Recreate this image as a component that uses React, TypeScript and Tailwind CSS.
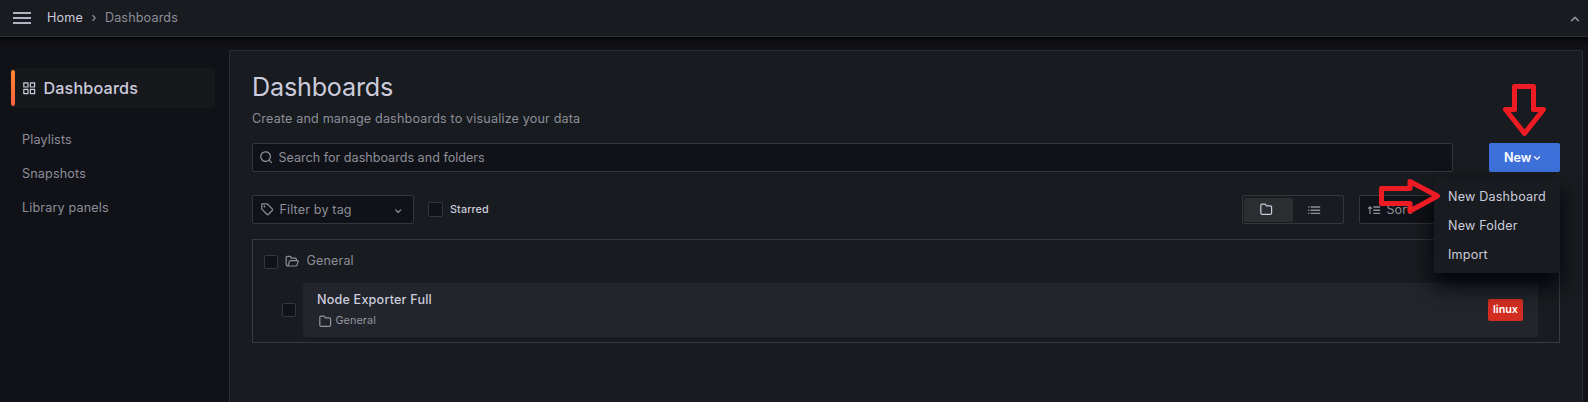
import React from 'react';

type IconProps = { className?: string };

const Svg = ({ className = '', children }: IconProps & { children: React.ReactNode }) => (
  <svg viewBox="0 0 24 24" fill="currentColor" className={`shrink-0 ${className}`}>
    {children}
  </svg>
);

const AppsIcon = (p: IconProps) => (
  <Svg {...p}>
    <path d="M10,13H3a1,1,0,0,0-1,1v7a1,1,0,0,0,1,1h7a1,1,0,0,0,1-1V14A1,1,0,0,0,10,13ZM9,20H4V15H9ZM21,2H14a1,1,0,0,0-1,1v7a1,1,0,0,0,1,1h7a1,1,0,0,0,1-1V3A1,1,0,0,0,21,2ZM20,9H15V4h5Zm1,4H14a1,1,0,0,0-1,1v7a1,1,0,0,0,1,1h7a1,1,0,0,0,1-1V14A1,1,0,0,0,21,13Zm-1,7H15V15h5ZM10,2H3A1,1,0,0,0,2,3v7a1,1,0,0,0,1,1h7a1,1,0,0,0,1-1V3A1,1,0,0,0,10,2ZM9,9H4V4H9Z" />
  </Svg>
);

const SearchIcon = (p: IconProps) => (
  <Svg {...p}>
    <path d="M21.71,20.29,18,16.61A9,9,0,1,0,16.61,18l3.68,3.68a1,1,0,0,0,1.42,0A1,1,0,0,0,21.71,20.29ZM11,18a7,7,0,1,1,7-7A7,7,0,0,1,11,18Z" />
  </Svg>
);

const FolderIcon = (p: IconProps) => (
  <Svg {...p}>
    <path d="M19,5.5H12.72l-.32-1a3,3,0,0,0-2.84-2H5a3,3,0,0,0-3,3v13a3,3,0,0,0,3,3H19a3,3,0,0,0,3-3V8.5A3,3,0,0,0,19,5.5Zm1,13a1,1,0,0,1-1,1H5a1,1,0,0,1-1-1V5.5a1,1,0,0,1,1-1H9.56a1,1,0,0,1,.95.68l.54,1.64A1,1,0,0,0,12,7.5h7a1,1,0,0,1,1,1Z" />
  </Svg>
);

const FolderOpenIcon = ({ className = '' }: IconProps) => (
  <svg viewBox="0 0 24 24" fill="none" stroke="currentColor" strokeWidth="2" strokeLinejoin="round" className={`shrink-0 ${className}`}>
    <path d="M4.5 20A2.5 2.5 0 0 1 2 17.500V6a2 2 0 0 1 2-2h4.200a2 2 0 0 1 1.900 1.400L10.600 7H17a2 2 0 0 1 2 2v2" />
    <path d="M4.500 20h13.600a2 2 0 0 0 1.900-1.400l2.100-6.300a1 1 0 0 0-1-1.300H9.200a2 2 0 0 0-1.900 1.400l-1.900 6a2.200 2.200 0 0 1-.9 1.600z" />
  </svg>
);

const TagIcon = (p: IconProps) => (
  <Svg {...p}>
    <path d="M7.5,6A1.5,1.5,0,1,0,9,7.5,1.5,1.5,0,0,0,7.5,6Zm13.62,4.71L12.71,2.29A1,1,0,0,0,12,2H3A1,1,0,0,0,2,3v9a1,1,0,0,0,.29.71l8.42,8.41a3,3,0,0,0,4.24,0L21.12,15a3,3,0,0,0,0-4.24Zm-1.41,2.82h0l-6.18,6.17a1,1,0,0,1-1.41,0L4,11.59V4h7.59l8.12,8.12a1,1,0,0,1,.29.71A1,1,0,0,1,19.71,13.53Z" />
  </Svg>
);

const AngleDownIcon = (p: IconProps) => (
  <Svg {...p}>
    <path d="M17,9.17a1,1,0,0,0-1.41,0L12,12.71,8.46,9.17a1,1,0,0,0-1.41,0,1,1,0,0,0,0,1.42l4.24,4.24a1,1,0,0,0,1.42,0L17,10.59A1,1,0,0,0,17,9.17Z" />
  </Svg>
);

const ListIcon = (p: IconProps) => (
  <Svg {...p}>
    <path d="M2 5.500h2v2.400H2zM6 5.500h16v2.400H6zM2 10.800h2v2.400H2zM6 10.800h16v2.400H6zM2 16.100h2v2.400H2zM6 16.100h16v2.400H6z" />
  </Svg>
);

const SortIcon = (p: IconProps) => (
  <Svg {...p}>
    <path d="M5 5 1.200 8.900l1.300 1.300L4 9V18.500h2V9l1.500 1.200 1.300-1.300zM10.500 5.500H22v2.400H10.500zM10.500 10.800H22v2.400H10.500zM10.500 16.100H22v2.400H10.500z" />
  </Svg>
);

const Checkbox = ({ className = '' }: IconProps) => (
  <span className={`block shrink-0 rounded-[2px] border border-[#34363c] bg-[#111217] ${className}`} />
);

const sideLinks = ['Playlists', 'Snapshots', 'Library panels'];
const menuItems = ['New Dashboard', 'New Folder', 'Import'];

export default function App() {
  return (
    <div className="relative flex h-[402px] w-[1588px] flex-col overflow-hidden bg-[#111217] font-['Inter',sans-serif] text-[12.6px] leading-[20px] tracking-[0.15px] text-[#ccccdc]">
      <header className="z-10 flex h-[37px] shrink-0 items-center border-b border-[#2f3136] bg-[#181b1f] pr-[6px] pl-[13px] shadow-[0_1px_5px_1px_#000]">
        <span className="flex w-[18px] flex-col gap-[3px]">
          <i className="h-[2px] bg-[#b2b2c0]" />
          <i className="h-[2px] bg-[#b2b2c0]" />
          <i className="h-[2px] bg-[#b2b2c0]" />
        </span>
        <span className="ml-[16px]">Home</span>
        <AngleDownIcon className="mx-[4px] size-[14px] -rotate-90 text-[#8d8e9a]" />
        <span className="text-[#8d8e9a]">Dashboards</span>
        <AngleDownIcon className="mt-[2px] ml-auto size-[14px] rotate-180 scale-135 text-[#8d8e9a]" />
      </header>

      <div className="flex min-h-0 grow">
        <aside className="w-[229px] shrink-0 pt-[31px] pl-[11px]">
          <div className="flex h-[40px] w-[204px] items-center rounded-[2px] bg-[#17181c]">
            <span className="h-[36px] w-[4px] rounded-[2px] bg-linear-to-b from-[#ff8833] to-[#f55f3e]" />
            <AppsIcon className="ml-[7px] size-[14.400px]" />
            <span className="ml-[7px] text-[16.2px] font-medium">Dashboards</span>
          </div>
          <nav className="flex flex-col gap-[14px] pt-[22px] pl-[11px] text-[#8d8e9a]">
            {sideLinks.map((l) => (
              <a key={l}>{l}</a>
            ))}
          </nav>
        </aside>

        <main className="mt-[13px] h-[400px] w-[1354px] shrink-0 rounded-[2px] border border-[#2b2d32] bg-[#181b1f] px-[22px] pt-[20px]">
          <h1 className="h-[32px] text-[25.2px] leading-[32px] tracking-[-0.22px]">Dashboards</h1>
          <p className="mt-[6px] tracking-[0.16px] text-[#8d8e9a]">Create and manage dashboards to visualize your data</p>

          <div className="mt-[14px] flex justify-between">
            <div className="flex h-[29px] w-[1201px] items-center rounded-[2px] border border-[#34363c] bg-[#111217] pl-[6px] tracking-normal text-[#8d8e9a]">
              <SearchIcon className="size-[14.400px]" />
              <span className="ml-[5px]">Search for dashboards and folders</span>
            </div>
            <button className="flex h-[29px] w-[71px] items-center rounded-[2px] bg-[#3d71d9] pl-[15px] font-semibold tracking-normal text-white">
              New
              <AngleDownIcon className="-ml-px size-[14px]" />
            </button>
          </div>

          <div className="mt-[23px] flex h-[29px] items-center">
            <div className="flex h-[29px] w-[162px] items-center rounded-[2px] border border-[#34363c] bg-[#111217] pr-[8px] pl-[7px] text-[#8d8e9a]">
              <TagIcon className="size-[14.400px]" />
              <span className="ml-[5px]">Filter by tag</span>
              <AngleDownIcon className="mt-[3px] ml-auto size-[14.400px]" />
            </div>
            <Checkbox className="ml-[14px] size-[15px]" />
            <span className="ml-[7px] text-[10.8px] font-medium tracking-[0.1px]">Starred</span>
            <div className="ml-auto flex h-[29px] w-[102px] items-center rounded-[2px] border border-[#34363c] pl-px">
              <span className="flex h-[24px] w-[49px] items-center justify-center rounded-[2px] bg-[#2b2d31] pr-[4px]">
                <FolderIcon className="size-[14.400px]" />
              </span>
              <ListIcon className="mt-px ml-[14px] size-[14.400px] text-[#8d8e9a]" />
            </div>
            <div className="ml-[15px] flex h-[29px] w-[201px] items-center rounded-[2px] border border-[#34363c] bg-[#111217] pl-[7px] text-[#8d8e9a]">
              <SortIcon className="mt-px size-[14.400px]" />
              <span className="ml-[5px]">Sort</span>
            </div>
          </div>

          <section className="mt-[15px] h-[104px] border border-[#393b40] pr-[21px] pl-[11px]">
            <div className="flex h-[43px] items-center text-[#8d8e9a]">
              <Checkbox className="size-[14px]" />
              <FolderOpenIcon className="ml-[7px] size-[14.400px]" />
              <span className="mb-[2px] ml-[7px]">General</span>
            </div>
            <div className="flex items-center pl-[18px]">
              <Checkbox className="size-[14px]" />
              <div className="ml-[7px] flex h-[54px] grow items-center justify-between rounded-[2px] bg-[#22252b] pr-[15px] pl-[14px]">
                <div>
                  <div className="font-medium tracking-[0.19px]">Node Exporter Full</div>
                  <div className="flex h-[21px] items-center text-[10.8px] tracking-[0.1px] text-[#9495a2]">
                    <FolderIcon className="mt-[2px] mr-[3px] ml-px size-[14.400px]" />
                    <span className="mt-[2px]">General</span>
                  </div>
                </div>
                <span className="flex h-[22px] w-[35px] items-center justify-center rounded-[2px] bg-[#d22d20] text-[10.8px] font-semibold tracking-normal text-white">
                  linux
                </span>
              </div>
            </div>
          </section>
        </main>
      </div>

      <ul className="absolute top-[179px] left-[1434px] z-20 flex h-[94px] w-[126px] flex-col rounded-[2px] bg-[#181b1f] pt-[3px] shadow-[0_12px_22px_#010409]">
        {menuItems.map((m) => (
          <li key={m} className="flex h-[29px] items-center pl-[14px] tracking-[0.19px]">
            {m}
          </li>
        ))}
      </ul>

      <svg className="absolute top-[84px] left-[1503px] z-30" width="43" height="53" fill="none" stroke="#ed1c24" strokeWidth="5" strokeLinejoin="round">
        <path d="M11.500 2.500H30.500V25.500H40.500L21.500 49.500L2.500 25.500H11.500Z" />
      </svg>
      <svg className="absolute top-[179px] left-[1379px] z-30" width="62" height="35" fill="none" stroke="#ed1c24" strokeWidth="5" strokeLinejoin="round">
        <path d="M2.500 9.500H31V2.500L58.500 17L31 32V24.500H2.500Z" />
      </svg>
    </div>
  );
}
